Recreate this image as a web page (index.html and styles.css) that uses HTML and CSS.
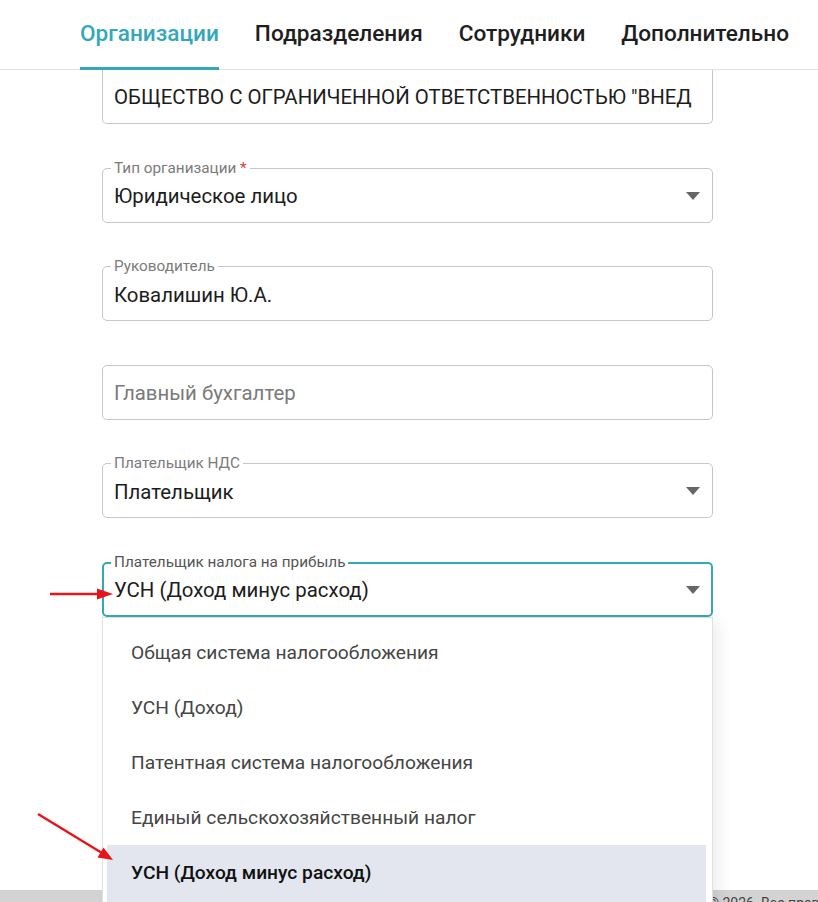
FILE: index.html
```html
<!DOCTYPE html>
<html lang="ru">
<head>
<meta charset="utf-8">
<title>Организации</title>
<link rel="stylesheet" href="styles.css">
</head>
<body>
<nav class="tabs">
  <a class="tab active">Организации</a>
  <a class="tab">Подразделения</a>
  <a class="tab">Сотрудники</a>
  <a class="tab">Дополнительно</a>
</nav>
<main class="main">
  <div class="form">
    <div class="field cut"><span class="value">ОБЩЕСТВО С ОГРАНИЧЕННОЙ ОТВЕТСТВЕННОСТЬЮ "ВНЕД</span></div>
    <div class="field select">
      <span class="label">Тип организации <span class="req">*</span></span>
      <span class="value">Юридическое лицо</span>
      <span class="caret"></span>
    </div>
    <div class="field">
      <span class="label">Руководитель</span>
      <span class="value">Ковалишин Ю.А.</span>
    </div>
    <div class="field">
      <span class="value placeholder">Главный бухгалтер</span>
    </div>
    <div class="field select">
      <span class="label">Плательщик НДС</span>
      <span class="value">Плательщик</span>
      <span class="caret"></span>
    </div>
    <div class="field select focused">
      <span class="label">Плательщик налога на прибыль</span>
      <span class="value">УСН (Доход минус расход)</span>
      <span class="caret"></span>
      <ul class="menu">
        <li class="item">Общая система налогообложения</li>
        <li class="item">УСН (Доход)</li>
        <li class="item">Патентная система налогообложения</li>
        <li class="item">Единый сельскохозяйственный налог</li>
        <li class="item selected">УСН (Доход минус расход)</li>
      </ul>
    </div>
  </div>
</main>
<footer class="footer">© 2026. Все права защищены</footer>
<svg class="arrows" width="818" height="902" viewBox="0 0 818 902">
  <line x1="50" y1="594" x2="100" y2="594" stroke="#e8141b" stroke-width="2.5"/>
  <polygon points="113,594 97,588.5 97,599.5" fill="#e8141b"/>
  <line x1="38" y1="814" x2="102" y2="853" stroke="#e8141b" stroke-width="2.5"/>
  <polygon points="113,860 97.5,857.5 103.5,847.5" fill="#e8141b"/>
</svg>
</body>
</html>
```
FILE: styles.css
```css
* { box-sizing: border-box; }
html, body { margin: 0; padding: 0; }
body {
  width: 818px;
  height: 902px;
  overflow: hidden;
  font-family: Roboto, "Noto Sans", sans-serif;
  background: #fff;
  color: #212121;
  position: relative;
}
.tabs {
  height: 70px;
  border-bottom: 1px solid #e2e2e2;
  display: flex;
  padding-left: 80px;
  gap: 36px;
  position: relative;
  z-index: 2;
  background: #fff;
}
.tab {
  height: 70px;
  display: flex;
  align-items: center;
  padding-bottom: 4px;
  font-size: 22.6px;
  font-weight: 500;
  color: #1e1e1e;
}
.tab.active {
  color: #33a8ba;
  box-shadow: inset 0 -3px 0 #33a8ba;
}
.main {
  height: 820px;
  position: relative;
  z-index: 3;
}
.form {
  margin-left: 102px;
  width: 611px;
  display: flex;
  flex-direction: column;
  gap: 43.5px;
}
.field {
  position: relative;
  height: 55px;
  border: 1px solid #c6c6c6;
  border-radius: 5px;
  display: flex;
  align-items: center;
  padding: 2px 40px 0 11px;
}
.field.cut {
  height: 54px;
  border-top: none;
  border-radius: 0 0 5px 5px;
  padding: 0 11px;
}
.value {
  font-size: 20.4px;
  white-space: nowrap;
  overflow: hidden;
  color: #1c1c1c;
}
.placeholder { color: #7a7a7a; }
.label {
  position: absolute;
  top: -10px;
  left: 8px;
  padding: 0 3px;
  background: #fff;
  font-size: 15.3px;
  line-height: 18px;
  color: #7b7b7b;
}
.req { color: #e53935; }
.caret {
  position: absolute;
  right: 12px;
  top: 23px;
  width: 0;
  height: 0;
  border-left: 7px solid transparent;
  border-right: 7px solid transparent;
  border-top: 8px solid #666;
}
.focused {
  border: 2px solid #33a8ba;
  padding-left: 10px;
}
.focused .label { color: #555; top: -11px; left: 7px; }
.focused .caret { right: 11px; top: 22px; }
.menu {
  position: absolute;
  top: 53px;
  left: -2px;
  width: 611px;
  margin: 0;
  padding: 7px 6px 20px 4px;
  list-style: none;
  background: #fff;
  border: 1px solid #e0e0e0;
  border-bottom: none;
  box-shadow: 6px 4px 14px rgba(0, 0, 0, 0.07);
  z-index: 5;
}
.item {
  height: 55px;
  display: flex;
  align-items: center;
  padding-left: 24px;
  font-size: 19.2px;
  color: #454545;
}
.item.selected {
  height: 60px;
  padding-bottom: 4px;
  background: #e3e6ee;
  font-weight: 500;
  color: #111;
}
.footer {
  height: 40px;
  background: #d3d3d3;
  padding: 5px 0 0 708px;
  font-size: 14px;
  color: #444;
  white-space: nowrap;
  position: relative;
  z-index: 1;
}
.arrows {
  position: absolute;
  left: 0;
  top: 0;
  z-index: 10;
  pointer-events: none;
}
```
